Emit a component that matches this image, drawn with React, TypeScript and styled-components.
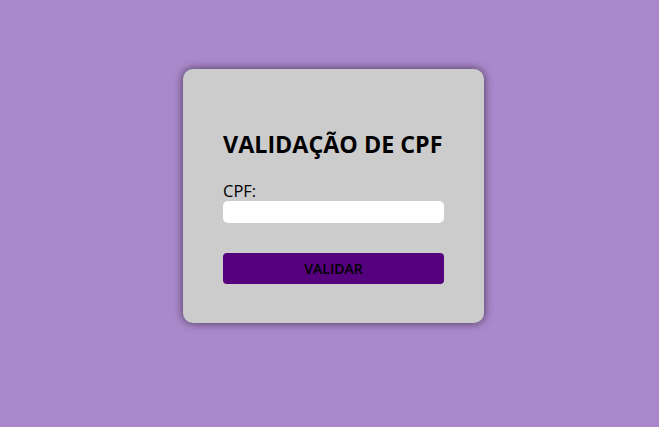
import React from "react";
import styled, { createGlobalStyle } from "styled-components";

const Global = createGlobalStyle`
  html, body { margin: 0; padding: 0; }
  body {
    background: #ab88cb;
    font-family: "Open Sans", "Noto Sans", sans-serif;
    min-height: 427px;
  }
`;

const Page = styled.div`
  width: 659px;
  height: 427px;
  display: flex;
  justify-content: center;
  align-items: flex-start;
  padding-top: 69px;
  box-sizing: border-box;
`;

const Card = styled.div`
  width: 301px;
  height: 254px;
  box-sizing: border-box;
  background: #cccccc;
  border-radius: 10px;
  padding: 0 40px;
  box-shadow: 0 0 10px rgba(0, 0, 0, 0.6);
  display: flex;
  flex-direction: column;
  margin-left: 8px;
`;

const Title = styled.h2`
  margin: 59px 0 0;
  font-size: 23.3px;
  line-height: 33px;
  font-weight: 700;
  color: #000;
  white-space: nowrap;
`;

const Label = styled.label`
  margin-top: 20px;
  font-size: 16.5px;
  line-height: 19px;
  color: #000;
`;

const Input = styled.input`
  margin-top: 1px;
  height: 22px;
  border: none;
  border-radius: 5px;
  background: #fff;
  box-sizing: border-box;
  outline: none;
`;

const Button = styled.button`
  margin-top: 30px;
  height: 31px;
  border: none;
  border-radius: 4px;
  background: #55007d;
  color: #000;
  font-family: "Open Sans", sans-serif;
  font-size: 14px;
  font-weight: 600;
  cursor: pointer;
`;

export default function App() {
  return (
    <>
      <Global />
      <Page>
        <Card>
          <Title>VALIDAÇÃO DE CPF</Title>
          <Label htmlFor="cpf">CPF:</Label>
          <Input id="cpf" type="text" />
          <Button>VALIDAR</Button>
        </Card>
      </Page>
    </>
  );
}
